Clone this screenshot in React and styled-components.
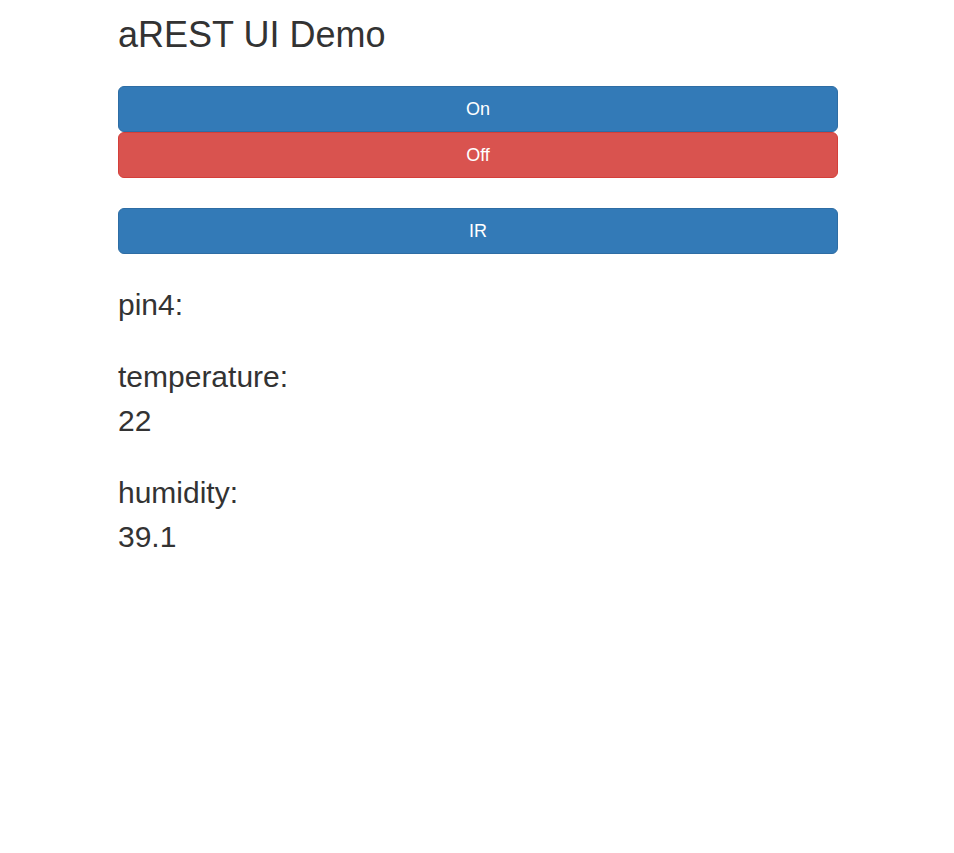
import React from "react";
import styled, { createGlobalStyle } from "styled-components";

const GlobalStyle = createGlobalStyle`
  html, body {
    margin: 0;
    padding: 0;
    background: #fff;
  }
  body {
    font-family: "Liberation Sans", Arial, Helvetica, sans-serif;
    font-size: 14px;
    line-height: 1.428571;
    color: #333;
  }
  * { box-sizing: border-box; }
`;

const Container = styled.div`
  width: 750px;
  margin: 0 auto;
  padding: 0 14px 0 16px;
`;

const Title = styled.h1`
  font-size: 36px;
  font-weight: 500;
  line-height: 1.1;
  margin: 15px 0 31px;
`;

const ButtonGroup = styled.div`
  display: flex;
  flex-direction: column;
  margin-bottom: ${(p) => p.$mb || 0}px;
`;

const Button = styled.button`
  display: block;
  width: 100%;
  height: 46px;
  padding: 10px 16px;
  font-family: inherit;
  font-size: 18px;
  line-height: 1.3333333;
  border-radius: 6px;
  border: 1px solid ${(p) => (p.$variant === "danger" ? "#d43f3a" : "#2e6da4")};
  background: ${(p) => (p.$variant === "danger" ? "#d9534f" : "#337ab7")};
  color: #fff;
  text-align: center;
  cursor: pointer;
`;

const Readings = styled.div`
  display: flex;
  flex-direction: column;
  gap: 39px;
  margin-top: 34px;
`;

const Group = styled.div`
  display: flex;
  flex-direction: column;
`;

const Label = styled.h2`
  margin: 0;
  font-size: 30px;
  font-weight: 500;
  line-height: 1.1;
`;

const Value = styled.h2`
  margin: 11px 0 0;
  font-size: 30px;
  font-weight: 500;
  line-height: 1.1;
  &:empty { display: none; }
`;

const readings = [
  { name: "pin4", value: "" },
  { name: "temperature", value: "22" },
  { name: "humidity", value: "39.1" },
];

export default function App() {
  return (
    <>
      <GlobalStyle />
      <Container>
        <Title>aREST UI Demo</Title>
        <ButtonGroup $mb={30}>
          <Button>On</Button>
          <Button $variant="danger">Off</Button>
        </ButtonGroup>
        <ButtonGroup>
          <Button>IR</Button>
        </ButtonGroup>
        <Readings>
          {readings.map((r) => (
            <Group key={r.name}>
              <Label>{r.name}:</Label>
              <Value>{r.value}</Value>
            </Group>
          ))}
        </Readings>
      </Container>
    </>
  );
}
